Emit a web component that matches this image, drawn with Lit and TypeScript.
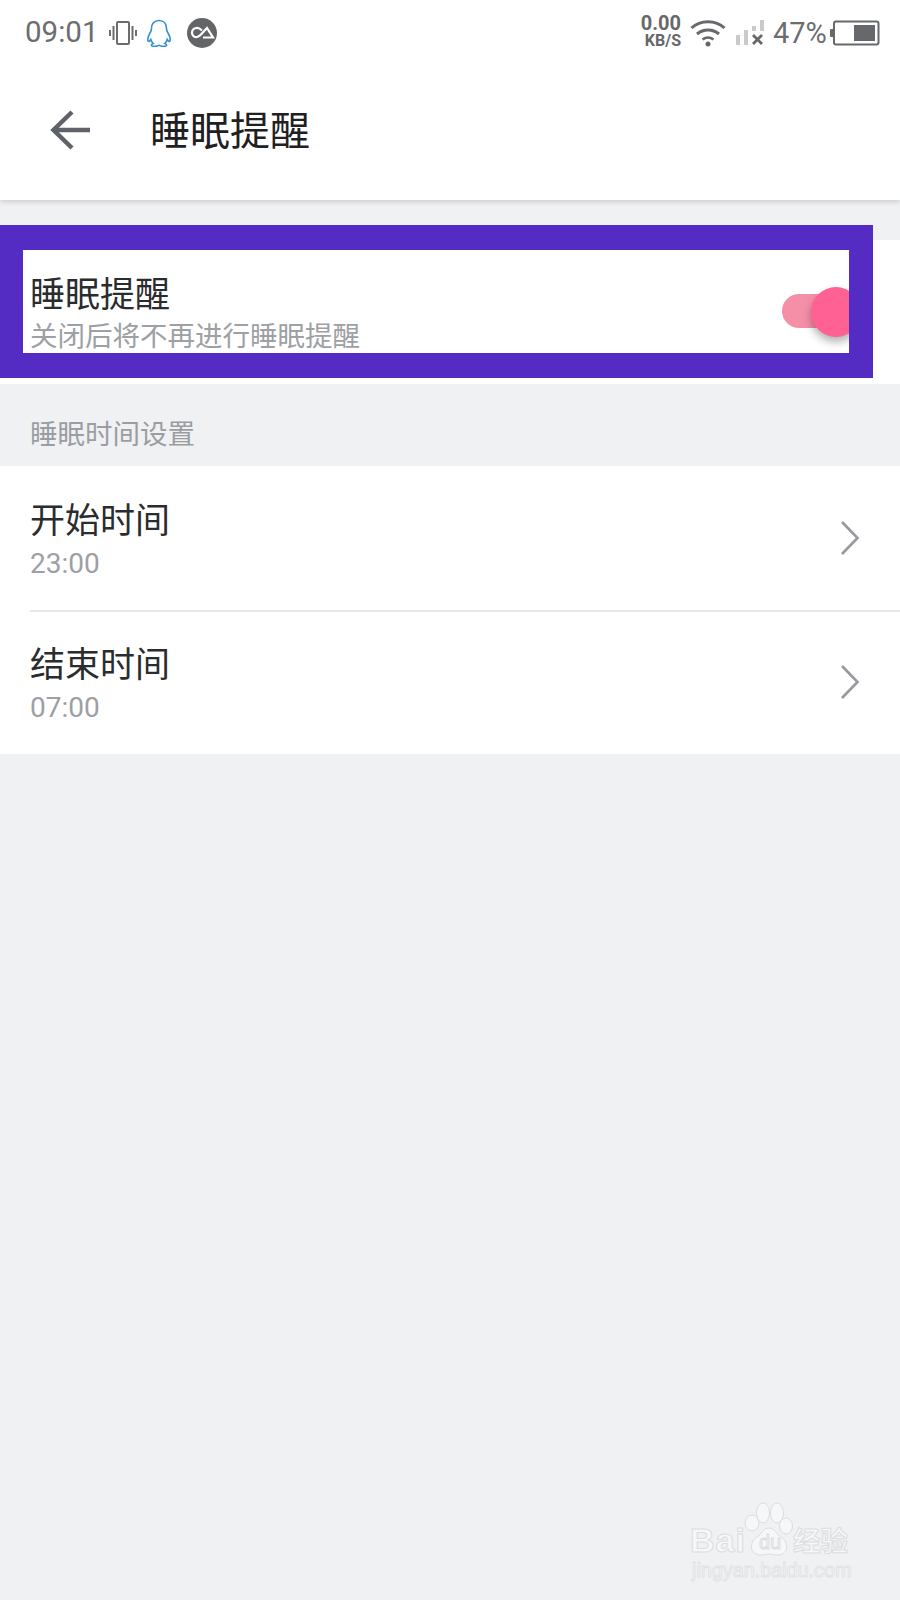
import {LitElement, html, css} from 'lit';
import {customElement} from 'lit/decorators.js';

const chevron = html`<svg class="chevron" width="20" height="36" viewBox="0 0 20 36">
  <path d="M2 2 L17.500 18 L2 34" fill="none" stroke="#96999d" stroke-width="2.600" />
</svg>`;

@customElement('app-root')
export class AppRoot extends LitElement {
  static styles = css`
    :host {
      display: block;
      position: relative;
      width: 900px;
      height: 1600px;
      overflow: hidden;
      background: #f0f1f3;
      font-family: 'Noto Sans CJK SC', 'Noto Sans', sans-serif;
    }

    .top {
      background: #fff;
      height: 200px;
      box-shadow: 0 2px 5px #00000026;
      position: relative;
    }

    .status {
      height: 66px;
      display: flex;
      align-items: center;
      padding-left: 25px;
      color: #6b6d70;
    }

    .status svg {
      display: block;
      flex: none;
    }

    .time {
      font: 29.500px/1 Roboto, sans-serif;
      width: 84px;
    }

    .qq {
      margin-left: 9px;
    }

    .ca {
      margin-left: 15px;
    }

    .speed {
      margin-left: auto;
      margin-bottom: 4px;
      width: 43px;
      font-family: Roboto, sans-serif;
      font-weight: 700;
      text-align: right;
      color: #66686b;
    }

    .speed div:first-child {
      font-size: 20px;
      line-height: 20px;
    }

    .speed div:last-child {
      font-size: 16px;
      line-height: 16px;
    }

    .wifi {
      margin-left: 9px;
    }

    .signal {
      margin-left: 9px;
    }

    .percent {
      font: 29px/1 Roboto, sans-serif;
      margin-left: 8px;
      width: 57px;
    }

    .battery {
      margin-right: 20px;
    }

    .bar {
      height: 134px;
      display: flex;
      align-items: center;
      padding-left: 50px;
      box-sizing: border-box;
      padding-bottom: 6px;
    }

    .bar h1 {
      margin: 0 0 5px 60px;
      font-size: 40px;
      line-height: 50px;
      font-weight: 400;
      color: #1f2022;
    }

    .card {
      background: #fff;
    }

    .first {
      margin-top: 40px;
    }

    .row {
      height: 144px;
      box-sizing: border-box;
      display: flex;
      align-items: center;
      justify-content: space-between;
      padding: 0 40px 0 30px;
    }

    .row.switch {
      padding-right: 39px;
    }

    .row + .row {
      position: relative;
    }

    .row + .row::before {
      content: '';
      position: absolute;
      left: 30px;
      right: 0;
      top: 0;
      height: 2px;
      background: #e6e7e9;
    }

    .title {
      font-size: 35px;
      line-height: 44px;
      color: #2b2c2e;
    }

    .sub {
      font-size: 27.500px;
      line-height: 40px;
      color: #9da0a4;
    }

    .num {
      font-family: Roboto, sans-serif;
      font-size: 28px;
      margin: 4px 0 -4px;
    }

    .section {
      height: 82px;
      box-sizing: border-box;
      padding: 28px 0 0 30px;
      font-size: 27.500px;
      line-height: 40px;
      color: #9a9ea3;
    }

    .toggle {
      position: relative;
      width: 79px;
      height: 50px;
    }

    .track {
      position: absolute;
      left: 0;
      top: 7px;
      width: 68px;
      height: 34px;
      border-radius: 17px;
      background: #f58fa8;
    }

    .knob {
      position: absolute;
      right: 0;
      top: 0;
      width: 50px;
      height: 50px;
      border-radius: 50%;
      background: #ff6195;
      box-shadow: 0 5px 9px #0000004d;
    }

    /* annotation frame drawn over the screenshot */
    .frame {
      position: absolute;
      left: 0;
      top: 225px;
      width: 873px;
      height: 153px;
      box-sizing: border-box;
      border: solid #542cc4;
      border-width: 25px 24px 25px 23px;
    }

    .mark {
      position: absolute;
      left: 690px;
      top: 1500px;
      width: 172px;
      color: #f6f7f8;
      -webkit-text-stroke: 1px #dcdddf;
    }

    .mark .bai {
      position: absolute;
      left: 0;
      top: 16px;
      font: 700 34px/48px 'Liberation Sans', sans-serif;
      letter-spacing: 1px;
    }

    .mark svg {
      position: absolute;
      left: 53px;
      top: 2px;
    }

    .mark .jy {
      position: absolute;
      left: 103px;
      top: 21px;
      font-size: 27.500px;
      line-height: 36px;
      font-weight: 700;
      white-space: nowrap;
    }

    .mark .url {
      position: absolute;
      left: 2px;
      top: 57px;
      font: 19.800px/26px 'Liberation Sans', sans-serif;
      white-space: nowrap;
      -webkit-text-stroke: 1px #e2e3e5;
    }
  `;

  render() {
    return html`
      <div class="top">
        <div class="status">
          <span class="time">09:01</span>
          <svg width="28" height="26" viewBox="0 0 28 26" fill="none" stroke="#6b6d70">
            <rect x="8" y="2" width="12" height="22" rx="1" stroke-width="2" />
            <path d="M4.500 6v14M23.500 6v14" stroke-width="2" />
            <path d="M1 10v6M27 10v6" stroke-width="2" />
          </svg>
          <svg class="qq" width="26" height="28" viewBox="0 0 26 28" fill="none" stroke="#2f90d8" stroke-width="1.600">
            <path d="M13 1.500c-5 0-7.500 3.600-7.500 8 0 1.600-.4 2.700-1.500 4.500-1.600 2.600-2.600 5.600-2 8 .5 1 1.800.2 2.800-1.500.4 1.600 1.200 3 2.400 4-1.300.5-2 1.300-1.700 2.100.6 1 4.500 1 6.500 0 .8-.4 1.200-.4 2 0 2 1 5.900 1 6.500 0 .3-.8-.4-1.600-1.700-2.100 1.200-1 2-2.400 2.400-4 1 1.700 2.300 2.500 2.800 1.500.6-2.400-.4-5.400-2-8-1.100-1.800-1.500-2.900-1.500-4.500 0-4.400-2.500-8-7.500-8z" />
          </svg>
          <svg class="ca" width="30" height="30" viewBox="0 0 30 30">
            <circle cx="15" cy="15" r="15" fill="#636567" />
            <path d="M15 12.500C13 10.500 11 9.500 9 10 5.500 10.500 5 13 5 15c0 3 3 4.500 5 4 3-.5 6-5 10-9l6 9.500H16" fill="none" stroke="#fff" stroke-width="2.200" />
          </svg>
          <div class="speed"><div>0.00</div><div>KB/S</div></div>
          <svg class="wifi" width="36" height="28" viewBox="0 0 36 28" fill="none" stroke="#66686b" stroke-width="3">
            <path d="M1.500 9C10.500 .5 25.500 .5 34.500 9" />
            <path d="M7 15c6.500-5.500 15.500-5.500 22 0" />
            <path d="M12.500 20.500c3.500-2.500 7.500-2.500 11 0" stroke-width="2.500" />
            <circle cx="18" cy="25" r="2.500" fill="#66686b" stroke="none" />
          </svg>
          <svg class="signal" width="30" height="26" viewBox="0 0 30 26">
            <rect x="1" y="15" width="4" height="10" fill="#c9cacb" />
            <rect x="9" y="10" width="4" height="15" fill="#c9cacb" />
            <rect x="17" y="6" width="4" height="5" fill="#c9cacb" />
            <rect x="25" y="0" width="4" height="11" fill="#c9cacb" />
            <path d="M18 15l9 9M27 15l-9 9" stroke="#66686b" stroke-width="2.800" />
          </svg>
          <span class="percent">47%</span>
          <svg class="battery" width="50" height="26" viewBox="0 0 50 26">
            <rect x="0" y="9" width="4" height="8" rx="1" fill="#66686b" />
            <rect x="4" y="1.500" width="44.500" height="23" rx="2" fill="none" stroke="#66686b" stroke-width="2" />
            <rect x="24" y="5" width="21" height="16" fill="#66686b" />
          </svg>
        </div>
        <div class="bar">
          <svg width="40" height="40" viewBox="0 0 40 40" fill="none" stroke="#5f6369" stroke-width="4.500">
            <path d="M40 20H4" />
            <path d="M22 2L3.500 20 22 38" />
          </svg>
          <h1>睡眠提醒</h1>
        </div>
      </div>

      <div class="card first">
        <div class="row switch">
          <div>
            <div class="title">睡眠提醒</div>
            <div class="sub">关闭后将不再进行睡眠提醒</div>
          </div>
          <div class="toggle">
            <div class="track"></div>
            <div class="knob"></div>
          </div>
        </div>
      </div>

      <div class="section">睡眠时间设置</div>

      <div class="card">
        <div class="row">
          <div>
            <div class="title">开始时间</div>
            <div class="sub num">23:00</div>
          </div>
          ${chevron}
        </div>
        <div class="row">
          <div>
            <div class="title">结束时间</div>
            <div class="sub num">07:00</div>
          </div>
          ${chevron}
        </div>
      </div>

      <div class="frame"></div>

      <div class="mark">
        <span class="bai">Bai</span>
        <svg width="56" height="56" viewBox="0 0 56 56" fill="#f6f7f8" stroke="#dcdddf" stroke-width="1">
          <ellipse cx="9" cy="21" rx="7" ry="8" />
          <ellipse cx="20" cy="11" rx="6.500" ry="10" />
          <ellipse cx="34" cy="11" rx="6.500" ry="10" />
          <ellipse cx="43" cy="24" rx="6.500" ry="8" />
          <path d="M26 26c-6 0-7 6-12 9-8 5-8 18 4 18 4 0 5-1 8-1s4 1 8 1c12 0 12-13 4-18-5-3-6-9-12-9z" />
          <text x="27" y="47" text-anchor="middle" font-family="Liberation Sans" font-size="20" fill="#f6f7f8">du</text>
        </svg>
        <span class="jy">经验</span>
        <span class="url">jingyan.baidu.com</span>
      </div>
    `;
  }
}
